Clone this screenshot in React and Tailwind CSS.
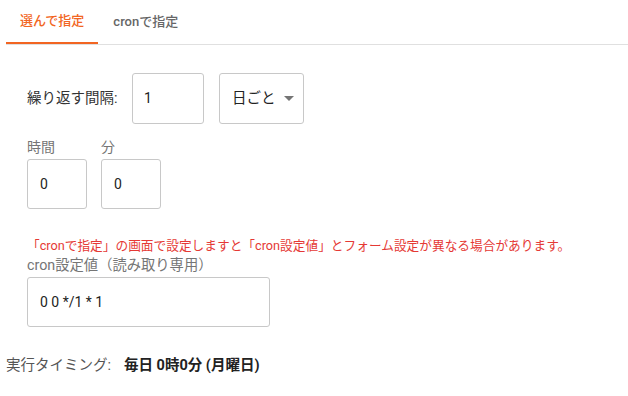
import React from "react";

const font = { fontFamily: "Roboto, 'Noto Sans CJK JP', sans-serif" };

export default function App() {
  return (
    <div className="w-[628px] h-[396px] bg-white overflow-hidden font-['Roboto','Noto_Sans_CJK_JP',sans-serif]" style={font}>
      <div className="ml-[6px] flex h-[45px] border-b border-[#e0e0e0]">
        <div className="h-[44px] px-[14px] flex items-center border-b-2 border-[#f26522] text-[13px] font-medium text-[#f26522]">
          選んで指定
        </div>
        <div className="h-[44px] px-[15px] flex items-center text-[13px] font-medium text-[#666]">
          cronで指定
        </div>
      </div>

      <div className="pl-[27px]">
        <div className="mt-[28px] flex items-center">
          <span className="w-[105px] text-[14.5px] text-[#333] leading-[20px] whitespace-nowrap">繰り返す間隔:</span>
          <div className="w-[72px] h-[51px] border border-[#c8c8c8] rounded-[3px] flex items-center pl-[11px] text-[14px] text-[#222]">
            1
          </div>
          <div className="ml-[15px] w-[85px] h-[51px] border border-[#c8c8c8] rounded-[3px] flex items-center pl-[12px] text-[14.5px] text-[#222]">
            <span>日ごと</span>
            <svg className="ml-[8px]" width="10" height="5" viewBox="0 0 10 5">
              <path d="M0 0 L10 0 L5 5 Z" fill="#757575" />
            </svg>
          </div>
        </div>

        <div className="mt-[13px] flex gap-[14px]">
          <div className="flex flex-col">
            <span className="text-[14px] leading-[20px] text-[#757575] mb-[2px]">時間</span>
            <div className="w-[60px] h-[50px] border border-[#c8c8c8] rounded-[3px] flex items-center pl-[12px] text-[14px] text-[#222]">0</div>
          </div>
          <div className="flex flex-col">
            <span className="text-[14px] leading-[20px] text-[#757575] mb-[2px]">分</span>
            <div className="w-[60px] h-[50px] border border-[#c8c8c8] rounded-[3px] flex items-center pl-[12px] text-[14px] text-[#222]">0</div>
          </div>
        </div>

        <div className="mt-[29px] text-[12.7px] leading-[16px] text-[#e53935] whitespace-nowrap">
          「cronで指定」の画面で設定しますと「cron設定値」とフォーム設定が異なる場合があります。
        </div>
        <div className="mt-[2px] text-[14.3px] leading-[18px] text-[#757575]">cron設定値（読み取り専用）</div>
        <div className="mt-[3px] w-[243px] h-[50px] border border-[#c8c8c8] rounded-[3px] flex items-center pl-[12px] text-[14px] text-[#222]">
          0 0 */1 * 1
        </div>
      </div>

      <div className="mt-[29px] ml-[6px] flex items-center text-[14.5px] leading-[20px]">
        <span className="text-[#555]">実行タイミング:</span>
        <span className="ml-[13px] font-bold text-[#222]">毎日 0時0分 (月曜日)</span>
      </div>
    </div>
  );
}
